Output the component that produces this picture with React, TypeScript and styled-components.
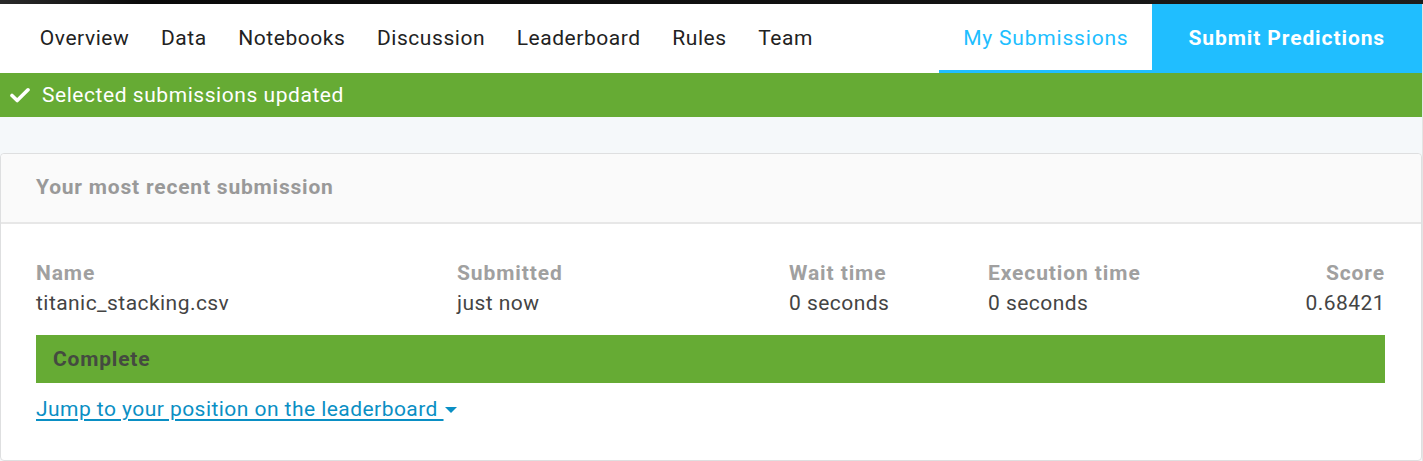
import React from "react";
import styled, { createGlobalStyle } from "styled-components";

const Global = createGlobalStyle`
  html, body { margin: 0; padding: 0; background: #ffffff; }
  body { font-family: Roboto, "Noto Sans", sans-serif; -webkit-font-smoothing: antialiased; }
  * { box-sizing: border-box; }
`;

const Page = styled.div`
  width: 1423px;
  height: 461px;
  overflow: hidden;
  display: flex;
  flex-direction: column;
  background: #f5f8fa;
  position: relative;
`;

const TopStrip = styled.div`
  height: 4px;
  background: linear-gradient(90deg, #2a2a2a 0%, #0a0a0a 10%, #111 60%, #1e1e1e 100%);
`;

const Nav = styled.nav`
  height: 69px;
  background: #ffffff;
  display: flex;
  align-items: stretch;
  padding-left: 24px;
  padding-right: 1px;
`;

const NavItem = styled.a`
  display: flex;
  align-items: center;
  padding: 0 15.8px 1px;
  font-size: 21px;
  color: #222;
  text-decoration: none;
  letter-spacing: 0.55px;
`;

const Spacer = styled.div`
  flex: 1;
`;

const Tab = styled.a`
  display: flex;
  align-items: center;
  padding: 2px 24px 0;
  font-size: 21px;
  color: #20beff;
  border-bottom: 3px solid #20beff;
  letter-spacing: 0.8px;
`;

const SubmitButton = styled.a`
  display: flex;
  align-items: center;
  padding: 0 37px 1px 36px;
  background: #20beff;
  color: #ffffff;
  font-size: 21px;
  font-weight: 700;
  letter-spacing: 0.9px;
`;

const Notice = styled.div`
  height: 44px;
  background: #66ab34;
  color: #ffffff;
  display: flex;
  align-items: center;
  gap: 12px;
  padding-left: 10px;
  margin-right: 1px;
  font-size: 21px;
  letter-spacing: 0.55px;
`;

const Gap = styled.div`
  height: 36px;
`;

const Card = styled.section`
  flex: 1;
  margin-right: 1px;
  background: #ffffff;
  border: 1px solid #dedfe0;
  border-radius: 4px;
  display: flex;
  flex-direction: column;
`;

const CardHeader = styled.header`
  height: 70px;
  background: #fafafa;
  border-bottom: 2px solid #e7e7e7;
  border-radius: 4px 4px 0 0;
  display: flex;
  align-items: center;
  padding-left: 35px;
  padding-bottom: 3px;
  font-size: 21px;
  font-weight: 700;
  letter-spacing: 0.8px;
  color: #999;
`;

const CardBody = styled.div`
  padding: 37px 36px 0 35px;
  display: flex;
  flex-direction: column;
`;

const Table = styled.div`
  display: grid;
  grid-template-columns: 421px 332px 199px 1fr auto;
  row-gap: 6px;
`;

const HeadCell = styled.div<{ $right?: boolean }>`
  font-size: 21px;
  font-weight: 700;
  letter-spacing: 0.9px;
  color: #a0a0a0;
  text-align: ${(p) => (p.$right ? "right" : "left")};
  line-height: 24px;
`;

const Cell = styled.div<{ $right?: boolean }>`
  font-size: 21px;
  letter-spacing: 0.45px;
  color: #444;
  text-align: ${(p) => (p.$right ? "right" : "left")};
  line-height: 24px;
`;

const Status = styled.div`
  margin-top: 20px;
  height: 48px;
  background: #66ab34;
  display: flex;
  align-items: center;
  padding-left: 17px;
  padding-bottom: 1px;
  font-size: 21px;
  font-weight: 700;
  letter-spacing: 0.8px;
  color: #444a40;
`;

const JumpLink = styled.a`
  margin-top: 14px;
  align-self: flex-start;
  font-size: 21px;
  letter-spacing: 0.45px;
  color: #0a8fc4;
  text-decoration: underline;
  text-underline-offset: 3px;
  display: inline-flex;
  align-items: center;
  white-space: pre;
  cursor: pointer;
`;

const Caret = styled.span`
  display: inline-block;
  width: 0;
  height: 0;
  border-left: 6px solid transparent;
  border-right: 6px solid transparent;
  border-top: 6px solid #0a8fc4;
  margin-left: 1px;
  margin-top: 2px;
`;

const Scroll = styled.div`
  position: absolute;
  right: 0;
  top: 4px;
  bottom: 0;
  width: 1px;
  background: #e4e4e4;
`;

function Check() {
  return (
    <svg width="20" height="16" viewBox="0 0 20 16" aria-hidden>
      <path d="M2 8.5 L7.2 13.5 L18 2.8" fill="none" stroke="#fff" strokeWidth="3.6" strokeLinecap="round" strokeLinejoin="round" />
    </svg>
  );
}

export default function App() {
  const tabs = ["Overview", "Data", "Notebooks", "Discussion", "Leaderboard", "Rules", "Team"];
  return (
    <>
      <Global />
      <Page>
        <TopStrip />
        <Nav>
          {tabs.map((t) => (
            <NavItem key={t}>{t}</NavItem>
          ))}
          <Spacer />
          <Tab>My Submissions</Tab>
          <SubmitButton>Submit Predictions</SubmitButton>
        </Nav>
        <Notice>
          <Check />
          <span>Selected submissions updated</span>
        </Notice>
        <Gap />
        <Card>
          <CardHeader>Your most recent submission</CardHeader>
          <CardBody>
            <Table>
              <HeadCell>Name</HeadCell>
              <HeadCell>Submitted</HeadCell>
              <HeadCell>Wait time</HeadCell>
              <HeadCell>Execution time</HeadCell>
              <HeadCell $right>Score</HeadCell>
              <Cell>titanic_stacking.csv</Cell>
              <Cell>just now</Cell>
              <Cell>0 seconds</Cell>
              <Cell>0 seconds</Cell>
              <Cell $right>0.68421</Cell>
            </Table>
            <Status>Complete</Status>
            <JumpLink>
              {"Jump to your position on the leaderboard "}
              <Caret />
            </JumpLink>
          </CardBody>
        </Card>
        <Scroll />
      </Page>
    </>
  );
}
